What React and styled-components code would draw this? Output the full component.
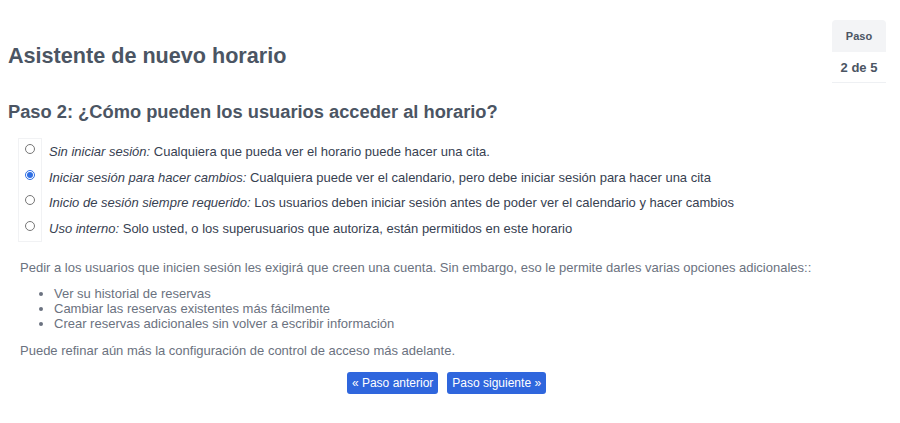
import React, { useState } from "react";
import styled, { createGlobalStyle } from "styled-components";

const GlobalStyle = createGlobalStyle`
  body {
    margin: 8px;
    background: #ffffff;
    font-family: "Liberation Sans", Arial, sans-serif;
    color: #4b5563;
  }
`;

const Header = styled.div`
  display: flex;
  justify-content: space-between;
  align-items: flex-start;
  padding-right: 6px;
`;

const Title = styled.h1`
  font-size: 21.6px;
  font-weight: bold;
  color: #4b5563;
  margin: 35px 0 0 0;
  line-height: 25px;
`;

const StepTable = styled.table`
  border-collapse: collapse;
  margin-top: 12px;
  text-align: center;
`;

const StepHead = styled.th`
  background: #f3f4f6;
  border-radius: 4px 4px 0 0;
  font-size: 11px;
  font-weight: bold;
  color: #4b5563;
  height: 32px;
  width: 54px;
  padding: 0;
`;

const StepCell = styled.td`
  font-size: 13px;
  font-weight: bold;
  color: #4b5563;
  height: 30px;
  padding: 0;
  border-bottom: 1px solid #eef0f3;
`;

const StepTitle = styled.h2`
  font-size: 18.3px;
  font-weight: bold;
  color: #4b5563;
  margin: 18px 0 15px 0;
  line-height: 22px;
`;

const Options = styled.table`
  border-collapse: collapse;
  margin-left: 10px;
`;

const RadioCell = styled.td`
  width: 22px;
  padding: 0;
  text-align: center;
  border-left: 1px solid #f1f2f4;
  border-right: 1px solid #f1f2f4;
  border-top: ${(p) => (p.$first ? "1px solid #f1f2f4" : "none")};
  border-bottom: ${(p) => (p.$last ? "1px solid #f1f2f4" : "none")};
  vertical-align: middle;
`;

const Radio = styled.input`
  width: 10px;
  height: 10px;
  margin: 0;
  accent-color: #2f6fe4;
  vertical-align: middle;
  position: relative;
  top: -3px;
`;

const OptionText = styled.td`
  font-size: 13px;
  color: #374151;
  height: 25.7px;
  padding: 0 0 0 7px;
  line-height: 15px;
`;

const Label = styled.em`
  font-style: italic;
`;

const Para = styled.p`
  font-size: 13px;
  color: #6b7280;
  margin: ${(p) => (p.$lead ? "18px 0 0 12px" : "0 0 0 12px")};
  line-height: 15px;
`;

const List = styled.ul`
  margin: 11px 0 12px 12px;
  padding-left: 34px;
  font-size: 13px;
  color: #6b7280;
  line-height: 15px;
`;

const Buttons = styled.div`
  display: flex;
  justify-content: center;
  gap: 9px;
  margin-top: 14px;
  padding-right: 7px;
`;

const Button = styled.button`
  background: #2f66dd;
  color: #ffffff;
  border: none;
  border-radius: 3px;
  height: 22px;
  padding: 0 5px;
  font-family: "Liberation Sans", Arial, sans-serif;
  font-size: 12px;
  cursor: pointer;
`;

const OPTIONS = [
  {
    label: "Sin iniciar sesión:",
    text: " Cualquiera que pueda ver el horario puede hacer una cita.",
  },
  {
    label: "Iniciar sesión para hacer cambios:",
    text: " Cualquiera puede ver el calendario, pero debe iniciar sesión para hacer una cita",
  },
  {
    label: "Inicio de sesión siempre requerido:",
    text: " Los usuarios deben iniciar sesión antes de poder ver el calendario y hacer cambios",
  },
  {
    label: "Uso interno:",
    text: " Solo usted, o los superusuarios que autoriza, están permitidos en este horario",
  },
];

export default function App() {
  const [access, setAccess] = useState(1);

  return (
    <>
      <GlobalStyle />
      <Header>
        <Title>Asistente de nuevo horario</Title>
        <StepTable>
          <thead>
            <tr>
              <StepHead>Paso</StepHead>
            </tr>
          </thead>
          <tbody>
            <tr>
              <StepCell>2 de 5</StepCell>
            </tr>
          </tbody>
        </StepTable>
      </Header>
      <StepTitle>Paso 2: ¿Cómo pueden los usuarios acceder al horario?</StepTitle>
      <Options>
        <tbody>
          {OPTIONS.map((opt, i) => (
            <tr key={opt.label}>
              <RadioCell $first={i === 0} $last={i === OPTIONS.length - 1}>
                <Radio
                  type="radio"
                  name="access"
                  checked={access === i}
                  onChange={() => setAccess(i)}
                />
              </RadioCell>
              <OptionText>
                <Label>{opt.label}</Label>
                {opt.text}
              </OptionText>
            </tr>
          ))}
        </tbody>
      </Options>
      <Para $lead>
        Pedir a los usuarios que inicien sesión les exigirá que creen una cuenta. Sin embargo, eso le permite darles varias opciones adicionales::
      </Para>
      <List>
        <li>Ver su historial de reservas</li>
        <li>Cambiar las reservas existentes más fácilmente</li>
        <li>Crear reservas adicionales sin volver a escribir información</li>
      </List>
      <Para>Puede refinar aún más la configuración de control de acceso más adelante.</Para>
      <Buttons>
        <Button>« Paso anterior</Button>
        <Button>Paso siguiente »</Button>
      </Buttons>
    </>
  );
}
